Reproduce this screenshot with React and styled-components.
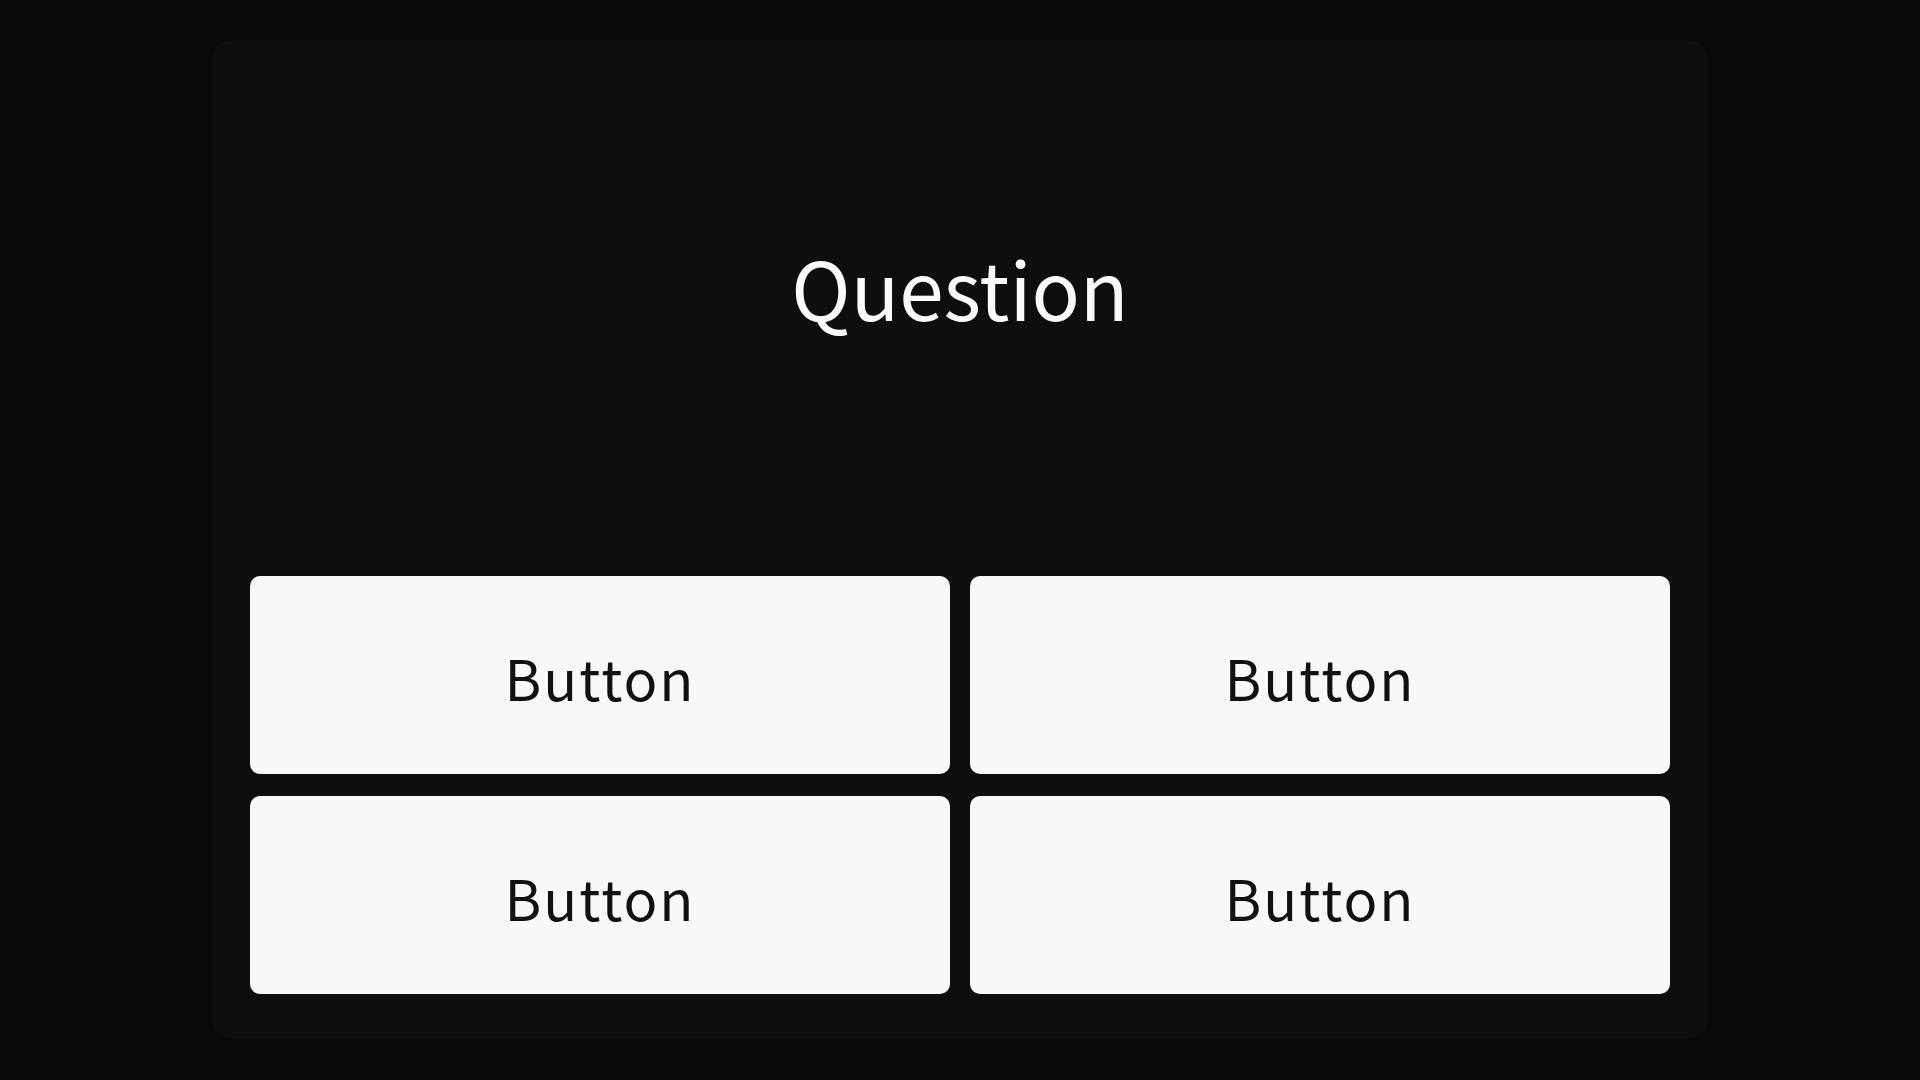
import styled, { createGlobalStyle } from "styled-components";

const GlobalStyle = createGlobalStyle`
  body {
    margin: 0;
    background: #09090b;
    font-family: "Noto Sans CJK JP", "Noto Sans", sans-serif;
  }
`;

const Page = styled.div`
  min-height: 100vh;
  box-sizing: border-box;
  padding-top: 40px;
  display: flex;
  justify-content: center;
  align-items: flex-start;
`;

const Card = styled.div`
  width: 1496px;
  height: 998px;
  box-sizing: border-box;
  padding: 0 38px 44px;
  background: #0e0e0e;
  border-radius: 20px;
  display: flex;
  flex-direction: column;
`;

const Title = styled.h1`
  height: 492px;
  margin: 0;
  display: flex;
  align-items: center;
  justify-content: center;
  color: #fafafa;
  font-size: 80px;
  font-weight: 400;
`;

const Grid = styled.div`
  margin-top: auto;
  display: grid;
  grid-template-columns: 1fr 1fr;
  grid-auto-rows: 198px;
  column-gap: 20px;
  row-gap: 22px;
`;

const Choice = styled.button`
  border: none;
  border-radius: 10px;
  padding: 2px 0 0;
  background: #f8f8f8;
  color: #111;
  font-family: inherit;
  font-size: 56px;
  letter-spacing: 2px;
  cursor: pointer;
`;

const answers = ["Button", "Button", "Button", "Button"];

export default function App() {
  return (
    <>
      <GlobalStyle />
      <Page>
        <Card>
          <Title>Question</Title>
          <Grid>
            {answers.map((a, i) => (
              <Choice key={i}>{a}</Choice>
            ))}
          </Grid>
        </Card>
      </Page>
    </>
  );
}
